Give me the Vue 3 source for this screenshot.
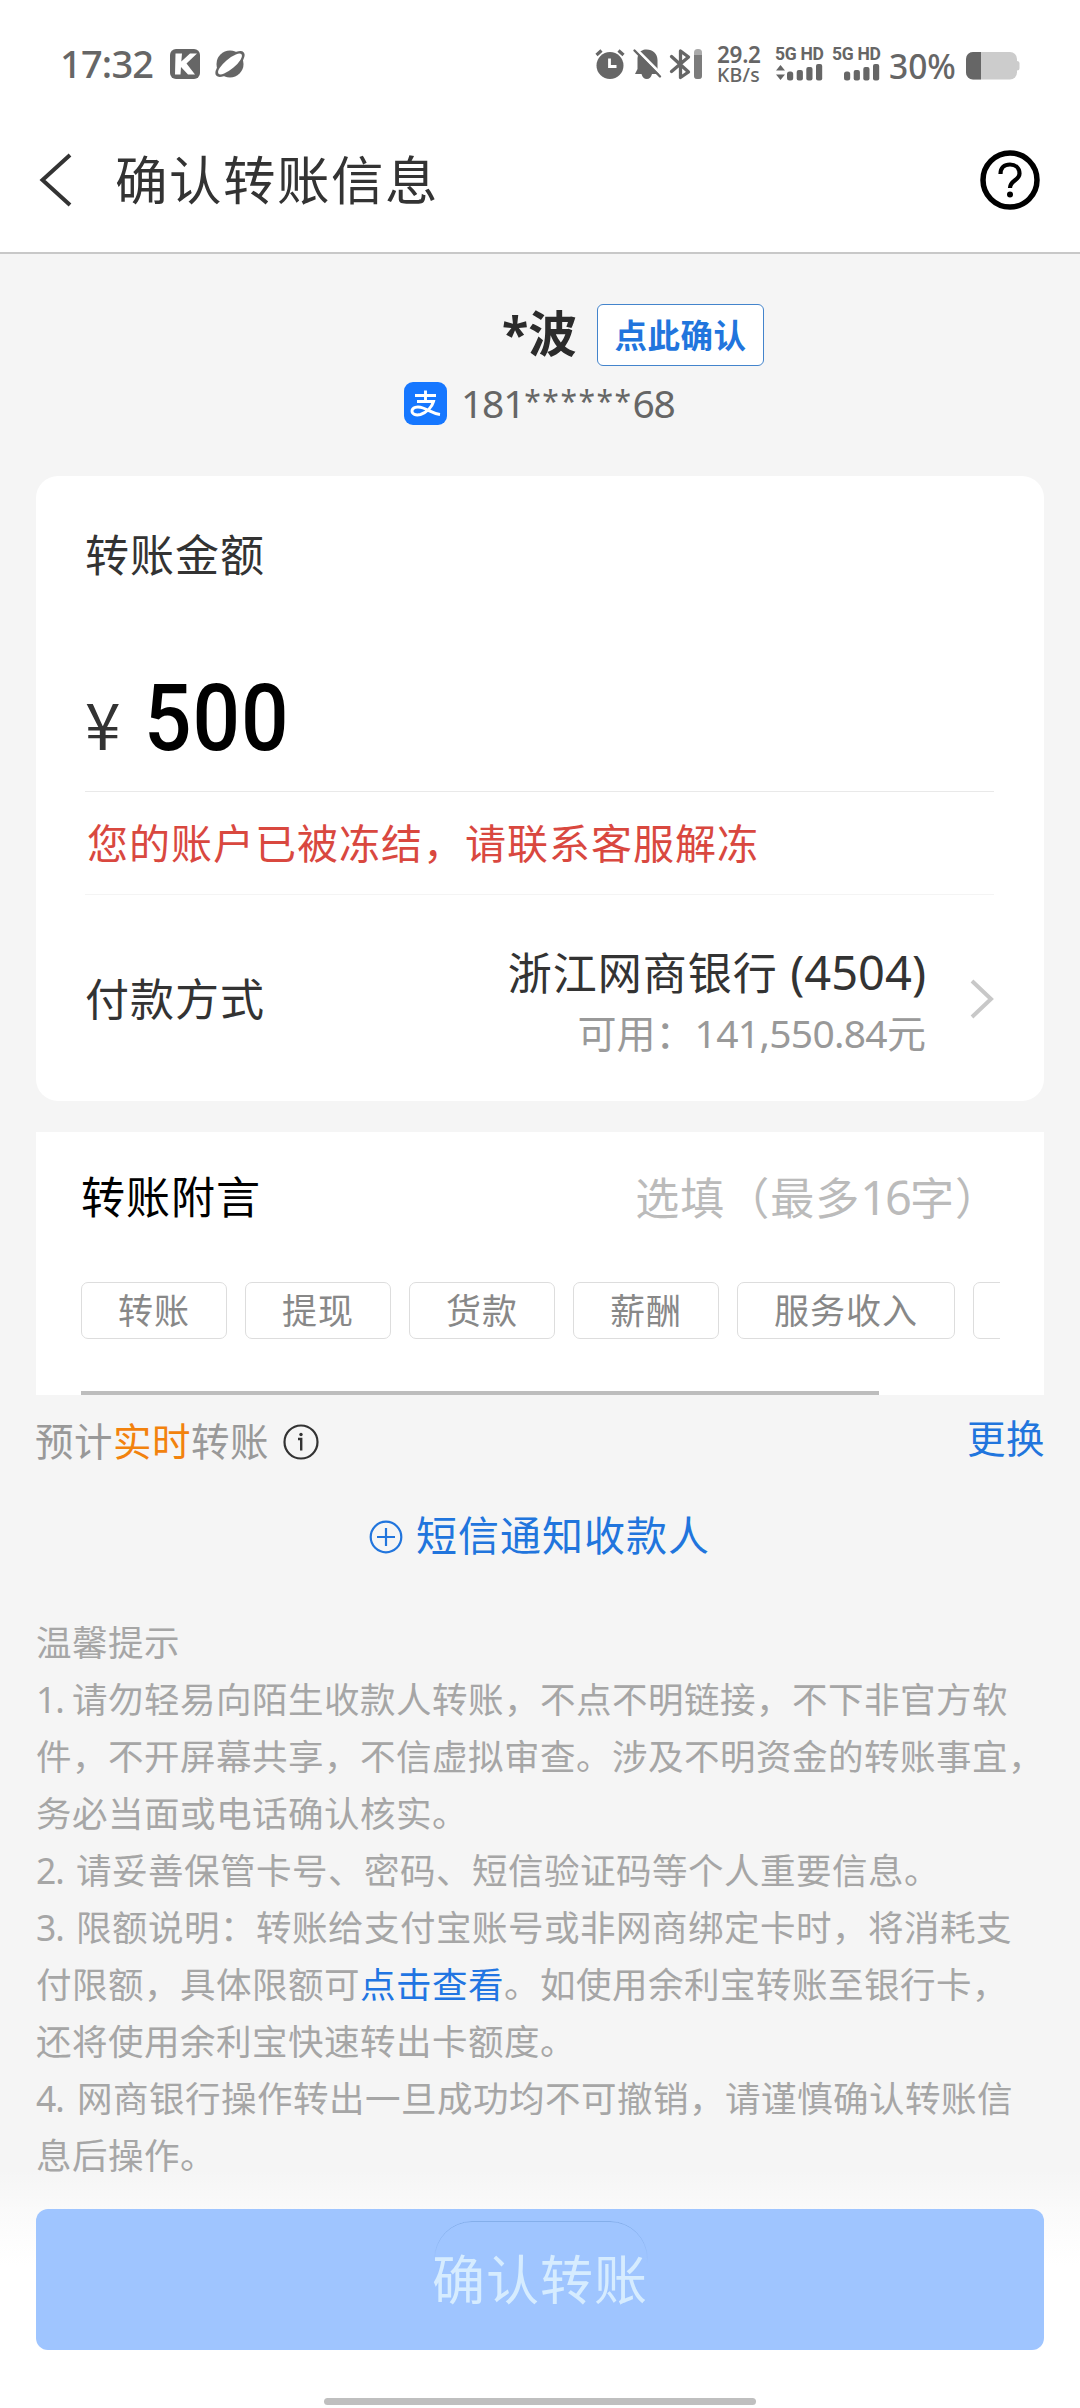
<script setup>
const tags = ['转账', '提现', '货款', '薪酬', '服务收入', '']

const tips = [
  { text: '温馨提示' },
  { no: '1.', width: 36, text: '请勿轻易向陌生收款人转账，不点不明链接，不下非官方软' },
  { text: '件，不开屏幕共享，不信虚拟审查。涉及不明资金的转账事宜，' },
  { text: '务必当面或电话确认核实。' },
  { no: '2.', width: 40, text: '请妥善保管卡号、密码、短信验证码等个人重要信息。' },
  { no: '3.', width: 40, text: '限额说明：转账给支付宝账号或非网商绑定卡时，将消耗支' },
  { text: '付限额，具体限额可', link: '点击查看', after: '。如使用余利宝转账至银行卡，' },
  { text: '还将使用余利宝快速转出卡额度。' },
  { no: '4.', width: 41, text: '网商银行操作转出一旦成功均不可撤销，请谨慎确认转账信' },
  { text: '息后操作。' },
]
</script>

<template>
  <div class="page" lang="zh-CN">
    <div class="status">
      <span class="clock">17:32</span>
      <svg class="app-k" width="30" height="30" viewBox="0 0 30 30">
        <rect width="30" height="30" rx="6" fill="#666" />
        <path d="M5.500 4.500H12L11.300 12.500 20 4.500H27L16.500 14.500 25 25.500H18L11 18 10.500 25.500H5Z" fill="#fff" />
      </svg>
      <svg class="planet" width="32" height="30" viewBox="0 0 32 30">
        <circle cx="16" cy="15" r="13.500" fill="#666" />
        <ellipse cx="16" cy="15" rx="18" ry="7.500" transform="rotate(-40 16 15)" fill="#666" />
        <ellipse cx="16" cy="15" rx="15" ry="5" transform="rotate(-40 16 15)" fill="#fff" />
      </svg>
      <span class="spacer"></span>
      <svg class="glyphs" width="108" height="32" viewBox="0 0 108 32">
        <circle cx="15" cy="17.500" r="13.500" fill="#666" />
        <path d="M1.500 7 6.500 2.500M23.500 2.500 28.500 7" stroke="#666" stroke-width="3.200" />
        <path d="M14.500 10.500V18.500H21.500" fill="none" stroke="#fff" stroke-width="2.800" />
        <path d="M43.500 4.500C46 3.500 47 1.500 51.500 1.500C58 1.500 62.500 6 62.500 12V21L65 26H40L42.500 21V10M46.500 26H57C56 29.500 54.500 31 51.800 31S47.500 29.500 46.500 26Z" fill="#666" />
        <path d="M40.500 .5 67.500 27.500" stroke="#fff" stroke-width="3" />
        <path d="M39.500 2.500 65 28.500" stroke="#666" stroke-width="2.400" stroke-linecap="round" />
        <path d="M76.500 8.500 93.500 24 85.500 29.500V3L93.500 9 76.500 23.500" fill="none" stroke="#666" stroke-width="3.300" stroke-linejoin="round" stroke-linecap="round" />
        <rect x="99" y="1" width="8" height="30" rx="3.500" fill="#aaa" />
        <path d="M99 7H107V27.500A3.500 3.500 0 0 1 103.500 31H102.500A3.500 3.500 0 0 1 99 27.500Z" fill="#7c7c7c" />
      </svg>
      <div class="speed"><b>29.2</b><span>KB/s</span></div>
      <div v-for="n in 2" :key="n" class="signal">
        <b>5G HD</b>
        <svg width="48" height="17" viewBox="0 0 48 17">
          <path v-if="n === 1" d="M1 6.500 5.500 1 10 6.500ZM1 10.500H10L5.500 16Z" fill="#666" />
          <rect x="12" y="7.500" width="6.200" height="9" rx="2.500" fill="#666" />
          <rect x="21.700" y="6" width="6.200" height="10.500" rx="2" fill="#666" />
          <rect x="31.300" y="3" width="6.200" height="13.500" rx="2" fill="#666" />
          <rect x="41" y="0" width="6.200" height="16.500" rx="2" fill="#666" />
        </svg>
      </div>
      <span class="percent">30%</span>
      <svg class="battery" width="54" height="28" viewBox="0 0 54 28">
        <rect x="48" y="9" width="5.500" height="9.500" rx="2.500" fill="#ccc" />
        <rect x="0" y="0" width="51" height="27.500" rx="7" fill="#ccc" />
        <path d="M15 0H7A7 7 0 0 0 0 7V20.500A7 7 0 0 0 7 27.500H15Z" fill="#666" />
      </svg>
    </div>

    <header class="nav">
      <svg class="back" width="34" height="54" viewBox="0 0 34 54">
        <path d="M31 2 3.500 27 31 52" fill="none" stroke="#333" stroke-width="4" />
      </svg>
      <h1>确认转账信息</h1>
      <svg class="help" width="60" height="60" viewBox="0 0 60 60">
        <circle cx="30" cy="30" r="27" fill="none" stroke="#000" stroke-width="5.500" />
        <path d="M20.500 24C20.500 17.500 24.500 14.500 30 14.500S39.500 18 39.500 23.500C39.500 30.500 30 30 30 38" fill="none" stroke="#000" stroke-width="4.200" />
        <circle cx="30" cy="44.500" r="3" />
      </svg>
    </header>

    <section class="payee">
      <div class="name-row">
        <strong>*波</strong>
        <button class="verify">点此确认</button>
      </div>
      <div class="account">
        <svg width="43" height="43" viewBox="0 0 43 43">
          <rect width="43" height="43" rx="9" fill="#1677ff" />
          <path d="M11 13.500H32M21.500 8.500V19M13 19.500H29.500C28 25 23 30.500 16.500 32.500C11.500 33.800 8 32 8 29C8 25.500 13 23.800 19 26C25 28.200 29 31.500 36 32.500" fill="none" stroke="#fff" stroke-width="2.900" />
        </svg>
        <span class="number">181<i>******</i>68</span>
      </div>
    </section>

    <section class="card amount-card">
      <div class="label">转账金额</div>
      <div class="amount"><span class="yen">¥</span><span class="value">500</span></div>
      <div class="warning">您的账户已被冻结，请联系客服解冻</div>
      <div class="method">
        <span class="method-label">付款方式</span>
        <div class="bank">
          <div class="bank-name">浙江网商银行 <span>(4504)</span></div>
          <div class="balance">可用：<span>141,550.84</span>元</div>
        </div>
        <svg class="arrow" width="25" height="40" viewBox="0 0 25 40">
          <path d="M2 2 21 20 2 38" fill="none" stroke="#c8c8c8" stroke-width="4" />
        </svg>
      </div>
    </section>

    <section class="card memo-card">
      <div class="memo-head">
        <span>转账附言</span>
        <span class="placeholder">选填（最多<span>16</span>字）</span>
      </div>
      <div class="tags">
        <span v-for="tag in tags" :key="tag" class="tag">{{ tag }}</span>
      </div>
      <div class="scrollbar"></div>
    </section>

    <div class="eta">
      <span>预计<em>实时</em>转账</span>
      <svg width="36" height="36" viewBox="0 0 36 36">
        <circle cx="18" cy="18" r="16.500" fill="none" stroke="#333" stroke-width="2.200" />
        <circle cx="18" cy="10.500" r="1.700" fill="#333" />
        <path d="M15 15H18.200V26.500" fill="none" stroke="#333" stroke-width="2.400" />
      </svg>
      <a>更换</a>
    </div>

    <div class="sms">
      <svg width="34" height="34" viewBox="0 0 34 34">
        <g fill="none" stroke="#2175dd" stroke-width="2.200">
          <circle cx="17" cy="17" r="15.300" />
          <path d="M8 17H26M17 8V26" />
        </g>
      </svg>
      <span>短信通知收款人</span>
    </div>

    <div class="tips">
      <p v-for="(line, i) in tips" :key="i">
        <span v-if="line.no" class="no" :style="{ width: line.width + 'px' }">{{ line.no }}</span>{{ line.text }}<a v-if="line.link">{{ line.link }}</a>{{ line.after }}
      </p>
    </div>

    <button class="submit">
      <span class="ghost"></span>
      <span>确认转账</span>
    </button>
    <div class="home-bar"></div>
  </div>
</template>

<style>
body {
  margin: 0;
}
</style>

<style scoped>
.page {
  width: 1080px;
  height: 2408px;
  overflow: hidden;
  display: flex;
  flex-direction: column;
  background: linear-gradient(#f5f5f5 2170px, #fafafa 2210px, #fff 2265px);
  font-family: 'Noto Sans', 'Noto Sans CJK SC', sans-serif;
  color: #333;
  line-height: 1.3;
  text-spacing-trim: space-all;
  white-space: nowrap;
}
svg {
  display: block;
  flex: none;
}
button {
  font-family: inherit;
  padding: 0;
  margin: 0;
}
.status {
  height: 108px;
  background: #fff;
  display: flex;
  align-items: flex-start;
  color: #666;
  padding: 0 60px 0 60px;
  box-sizing: border-box;
}
.clock {
  width: 110px;
  font-size: 38px;
  font-weight: 500;
  line-height: 40px;
  margin-top: 43px;
  letter-spacing: -0.8px;
}
.app-k {
  margin-top: 49px;
}
.planet {
  margin: 49px 0 0 14px;
}
.spacer {
  flex: 1;
}
.glyphs {
  margin: 48px 14px 0 0;
}
.speed {
  width: 58px;
  margin-top: 42px;
  display: flex;
  flex-direction: column;
}
.speed b {
  font-size: 22.5px;
  font-weight: 600;
  line-height: 25px;
  letter-spacing: -0.3px;
}
.speed span {
  font-size: 19.5px;
  font-weight: 500;
  line-height: 15px;
  letter-spacing: 0.2px;
}
.signal {
  width: 57px;
  margin-top: 44px;
}
.signal b {
  display: block;
  font-size: 17.5px;
  line-height: 20px;
  font-family: Roboto, sans-serif;
  letter-spacing: -0.3px;
}
.percent {
  width: 77px;
  font-size: 33.5px;
  font-weight: 500;
  line-height: 36px;
  margin-top: 48px;
}
.battery {
  margin-top: 52px;
}
.nav {
  height: 144px;
  border-bottom: 2px solid #c8c8c8;
  background: #fff;
  display: flex;
  align-items: center;
  padding: 0 40px 0 39px;
}
h1 {
  flex: 1;
  margin: 0 0 1px 42px;
  font-size: 52.5px;
  letter-spacing: 1.5px;
  font-weight: 400;
  line-height: 70px;
}
.payee {
  padding: 50px 0 51px;
}
.name-row {
  height: 62px;
  display: flex;
  align-items: center;
  padding-left: 502px;
}
.name-row strong {
  font-size: 48.5px;
  line-height: 62px;
  margin-bottom: 5px;
  color: #2b2b2b;
  width: 95px;
}
.verify {
  width: 167px;
  height: 62px;
  box-sizing: border-box;
  border: 1.5px solid #4384cc;
  border-radius: 6px;
  background: #fff;
  color: #2175dd;
  font-size: 32.5px;
  letter-spacing: 0.5px;
  font-weight: 700;
  line-height: 57px;
}
.account {
  margin-top: 16px;
  height: 43px;
  display: flex;
  align-items: center;
  padding-left: 404px;
  color: #666;
}
.number {
  margin: 0 0 2px 14px;
  font-size: 39px;
  line-height: 43px;
  letter-spacing: -1.2px;
}
.number i {
  display: inline-block;
  font-style: normal;
  font-size: 30px;
  line-height: 27px;
  vertical-align: 6px;
  letter-spacing: 1.5px;
}
.card {
  width: 1008px;
  margin: 0 auto;
  background: #fff;
  box-sizing: border-box;
}
.amount-card {
  height: 625px;
  border-radius: 22px;
  padding: 49px 50px 0 49px;
}
.label {
  font-size: 44px;
  letter-spacing: 1px;
  line-height: 60px;
}
.amount {
  height: 207px;
  box-sizing: border-box;
  border-bottom: 1px solid #e9e9e9;
  display: flex;
  align-items: baseline;
  padding: 88px 0 0;
}
.yen {
  width: 59px;
  font-family: 'Noto Sans CJK SC', sans-serif;
  font-size: 64px;
  font-weight: 400;
  line-height: 92px;
}
.value {
  font-family: Roboto, sans-serif;
  font-size: 92px;
  font-weight: 500;
  line-height: 92px;
  letter-spacing: 1px;
  color: #000;
  transform: scaleX(0.91);
  transform-origin: 0 50%;
}
.warning {
  height: 103px;
  box-sizing: border-box;
  border-bottom: 1px solid #f4f4f4;
  line-height: 102px;
  font-size: 41px;
  letter-spacing: 1px;
  color: #d9483f;
  padding-left: 2px;
}
.method {
  height: 206px;
  display: flex;
  align-items: center;
}
.method-label {
  font-size: 44px;
  letter-spacing: 1px;
  flex: 1;
  padding-top: 4px;
}
.bank {
  padding-top: 5px;
  text-align: right;
}
.bank-name {
  font-size: 44px;
  letter-spacing: 1px;
  line-height: 62px;
}
.bank-name span {
  font-size: 47px;
  letter-spacing: 0;
}
.balance {
  font-size: 39px;
  line-height: 57px;
  color: #999;
}
.balance span {
  letter-spacing: -0.7px;
}
.arrow {
  margin: 2px -1px 0 44px;
}
.memo-card {
  margin-top: 31px;
  height: 263px;
  padding-left: 45px;
}
.memo-head {
  height: 130px;
  display: flex;
  align-items: center;
  justify-content: space-between;
  font-size: 44px;
  letter-spacing: 1px;
  color: #000;
  padding: 2px 44px 0 0;
  box-sizing: border-box;
}
.placeholder {
  color: #bbb;
}
.placeholder span {
  font-size: 47px;
  letter-spacing: -2px;
}
.tags {
  margin-top: 20px;
  width: 919px;
  height: 57px;
  display: flex;
  gap: 18px;
  overflow: hidden;
}
.tag {
  flex: none;
  height: 57px;
  box-sizing: border-box;
  padding: 0 36px;
  border: 1px solid #ddd;
  border-radius: 7px;
  font-size: 35px;
  letter-spacing: 1px;
  line-height: 56px;
  color: #888;
}
.scrollbar {
  margin-top: 52px;
  width: 798px;
  height: 4px;
  background: #bdbdbd;
}
.eta {
  height: 94px;
  display: flex;
  align-items: center;
  padding: 0 35px;
  font-size: 38.5px;
  letter-spacing: 0.5px;
  color: #999;
}
.eta span {
  padding-bottom: 1px;
}
.eta em {
  font-style: normal;
  color: #f2820d;
}
.eta svg {
  margin-left: 14px;
}
.eta a {
  margin-left: auto;
  padding-bottom: 8px;
  color: #2175dd;
}
.sms {
  height: 96px;
  display: flex;
  align-items: center;
  padding-left: 369px;
  gap: 13px;
  font-size: 41px;
  letter-spacing: 1px;
  color: #2175dd;
}
.sms span {
  padding-bottom: 2px;
}
.tips {
  margin: 29px 0 0 36px;
  height: 570px;
  color: #a6a6a6;
}
.tips p {
  margin: 0;
  font-size: 35.5px;
  letter-spacing: 0.5px;
  line-height: 57px;
}
.tips a {
  color: #2175e2;
}
.no {
  display: inline-block;
  letter-spacing: -1px;
}
.submit {
  position: relative;
  width: 1008px;
  height: 141px;
  margin: 25px 36px 0;
  border: 0;
  border-radius: 12px;
  background: #9fc5ff;
  color: #d6ecff;
  font-size: 53px;
  letter-spacing: 1px;
  line-height: 141px;
}
.ghost {
  position: absolute;
  left: 398px;
  top: 12px;
  width: 214px;
  height: 76px;
  box-sizing: border-box;
  border: 1px solid #84aeea;
  border-radius: 38px;
  mask-image: linear-gradient(#000, transparent 55%);
}
.home-bar {
  width: 432px;
  height: 7px;
  margin: 48px auto 0;
  border-radius: 4px;
  background: #bfbfbf;
}
</style>
